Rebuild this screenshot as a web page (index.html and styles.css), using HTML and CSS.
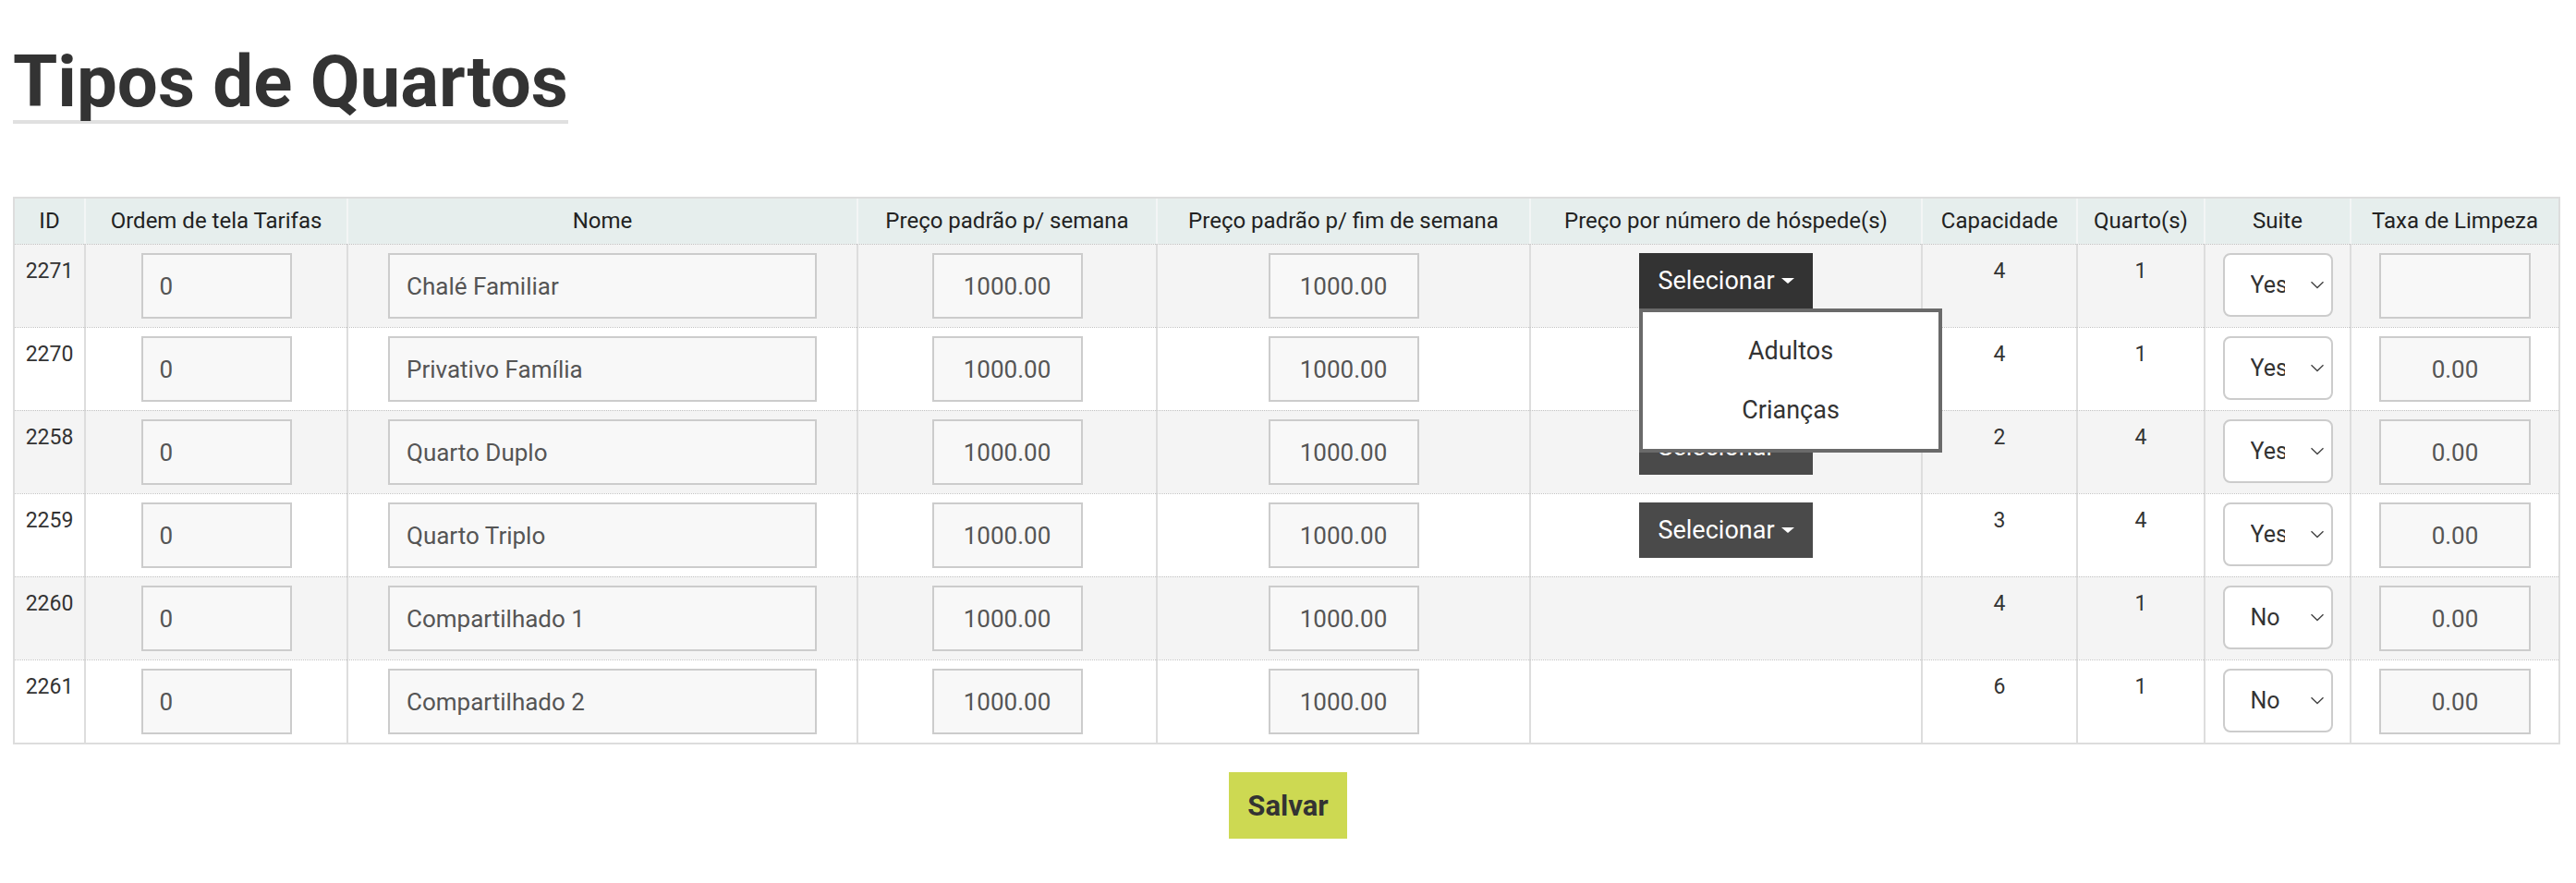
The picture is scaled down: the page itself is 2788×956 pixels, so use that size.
FILE: index.html
```html
<!DOCTYPE html>
<html lang="pt">
<head>
<meta charset="utf-8">
<title>Tipos de Quartos</title>
<link rel="stylesheet" href="styles.css">
</head>
<body>
<div class="page">
  <div class="title-bar"><h1 class="title">Tipos de Quartos</h1></div>

  <table class="rooms">
    <thead>
      <tr>
        <th class="col-id">ID</th>
        <th class="col-order">Ordem de tela Tarifas</th>
        <th class="col-name">Nome</th>
        <th class="col-week">Preço padrão p/ semana</th>
        <th class="col-weekend">Preço padrão p/ fim de semana</th>
        <th class="col-guest">Preço por número de hóspede(s)</th>
        <th class="col-cap">Capacidade</th>
        <th class="col-rooms">Quarto(s)</th>
        <th class="col-suite">Suite</th>
        <th class="col-fee">Taxa de Limpeza</th>
      </tr>
    </thead>
    <tbody>
      <tr>
        <td class="cell-text">2271</td>
        <td><input class="field field-order" value="0"></td>
        <td><input class="field field-name" value="Chalé Familiar"></td>
        <td><input class="field field-price" value="1000.00"></td>
        <td><input class="field field-price" value="1000.00"></td>
        <td>
          <div class="dropdown">
            <button class="select-btn is-active" type="button">Selecionar<span class="caret"></span></button>
            <ul class="dropdown-menu">
              <li>Adultos</li>
              <li>Crianças</li>
            </ul>
          </div>
        </td>
        <td class="cell-text">4</td>
        <td class="cell-text">1</td>
        <td><div class="suite"><select class="suite-select"><option selected>Yes</option><option>No</option></select><svg class="chev" width="16" height="9" viewBox="0 0 16 9"><path d="M1.5 1.2 8 7.6l6.5-6.4" fill="none" stroke="#444" stroke-width="1.4"/></svg></div></td>
        <td><input class="field field-fee" value=""></td>
      </tr>
      <tr>
        <td class="cell-text">2270</td>
        <td><input class="field field-order" value="0"></td>
        <td><input class="field field-name" value="Privativo Família"></td>
        <td><input class="field field-price" value="1000.00"></td>
        <td><input class="field field-price" value="1000.00"></td>
        <td><div class="dropdown"><button class="select-btn" type="button">Selecionar<span class="caret"></span></button></div></td>
        <td class="cell-text">4</td>
        <td class="cell-text">1</td>
        <td><div class="suite"><select class="suite-select"><option selected>Yes</option><option>No</option></select><svg class="chev" width="16" height="9" viewBox="0 0 16 9"><path d="M1.5 1.2 8 7.6l6.5-6.4" fill="none" stroke="#444" stroke-width="1.4"/></svg></div></td>
        <td><input class="field field-fee" value="0.00"></td>
      </tr>
      <tr>
        <td class="cell-text">2258</td>
        <td><input class="field field-order" value="0"></td>
        <td><input class="field field-name" value="Quarto Duplo"></td>
        <td><input class="field field-price" value="1000.00"></td>
        <td><input class="field field-price" value="1000.00"></td>
        <td><div class="dropdown"><button class="select-btn" type="button">Selecionar<span class="caret"></span></button></div></td>
        <td class="cell-text">2</td>
        <td class="cell-text">4</td>
        <td><div class="suite"><select class="suite-select"><option selected>Yes</option><option>No</option></select><svg class="chev" width="16" height="9" viewBox="0 0 16 9"><path d="M1.5 1.2 8 7.6l6.5-6.4" fill="none" stroke="#444" stroke-width="1.4"/></svg></div></td>
        <td><input class="field field-fee" value="0.00"></td>
      </tr>
      <tr>
        <td class="cell-text">2259</td>
        <td><input class="field field-order" value="0"></td>
        <td><input class="field field-name" value="Quarto Triplo"></td>
        <td><input class="field field-price" value="1000.00"></td>
        <td><input class="field field-price" value="1000.00"></td>
        <td><div class="dropdown"><button class="select-btn" type="button">Selecionar<span class="caret"></span></button></div></td>
        <td class="cell-text">3</td>
        <td class="cell-text">4</td>
        <td><div class="suite"><select class="suite-select"><option selected>Yes</option><option>No</option></select><svg class="chev" width="16" height="9" viewBox="0 0 16 9"><path d="M1.5 1.2 8 7.6l6.5-6.4" fill="none" stroke="#444" stroke-width="1.4"/></svg></div></td>
        <td><input class="field field-fee" value="0.00"></td>
      </tr>
      <tr>
        <td class="cell-text">2260</td>
        <td><input class="field field-order" value="0"></td>
        <td><input class="field field-name" value="Compartilhado 1"></td>
        <td><input class="field field-price" value="1000.00"></td>
        <td><input class="field field-price" value="1000.00"></td>
        <td></td>
        <td class="cell-text">4</td>
        <td class="cell-text">1</td>
        <td><div class="suite"><select class="suite-select"><option>Yes</option><option selected>No</option></select><svg class="chev" width="16" height="9" viewBox="0 0 16 9"><path d="M1.5 1.2 8 7.6l6.5-6.4" fill="none" stroke="#444" stroke-width="1.4"/></svg></div></td>
        <td><input class="field field-fee" value="0.00"></td>
      </tr>
      <tr>
        <td class="cell-text">2261</td>
        <td><input class="field field-order" value="0"></td>
        <td><input class="field field-name" value="Compartilhado 2"></td>
        <td><input class="field field-price" value="1000.00"></td>
        <td><input class="field field-price" value="1000.00"></td>
        <td></td>
        <td class="cell-text">6</td>
        <td class="cell-text">1</td>
        <td><div class="suite"><select class="suite-select"><option>Yes</option><option selected>No</option></select><svg class="chev" width="16" height="9" viewBox="0 0 16 9"><path d="M1.5 1.2 8 7.6l6.5-6.4" fill="none" stroke="#444" stroke-width="1.4"/></svg></div></td>
        <td><input class="field field-fee" value="0.00"></td>
      </tr>
    </tbody>
  </table>

  <div class="actions"><button class="save-btn" type="button">Salvar</button></div>
</div>
</body>
</html>
```

FILE: styles.css
```css
* { box-sizing: border-box; }

html, body {
  margin: 0;
  padding: 0;
  background: #fff;
}

body {
  font-family: "Roboto", "Liberation Sans", sans-serif;
  color: #333;
}

.page {
  padding: 48px 14px 0 14px;
}

.title-bar {
  display: flex;
  align-items: flex-start;
}

.title {
  margin: 0;
  font-family: "Roboto", sans-serif;
  font-weight: 700;
  font-size: 78px;
  line-height: 82px;
  color: #333;
  border-bottom: 4px solid #e0e0e0;
}

.rooms {
  margin-top: 79px;
  width: 2757px;
  table-layout: fixed;
  border-collapse: separate;
  border-spacing: 0;
  border: 2px solid #ddd;
  font-family: "Roboto", sans-serif;
}

.rooms th {
  background: #e6eeed;
  font-weight: 400;
  font-size: 24px;
  line-height: 27px;
  padding: 11px 2px;
  color: #222;
  text-align: center;
  vertical-align: middle;
  white-space: nowrap;
  border-left: 2px solid #f3f5f5;
}

.rooms th:first-child { border-left: none; }

.col-id { width: 75px; }
.col-order { width: 284px; }
.col-name { width: 552px; }
.col-week { width: 324px; }
.col-weekend { width: 404px; }
.col-guest { width: 424px; }
.col-cap { width: 168px; }
.col-rooms { width: 138px; }
.col-suite { width: 158px; }
.col-fee { width: 226px; }

.rooms td {
  padding: 9px 4px;
  vertical-align: top;
  text-align: center;
  border-top: 1px dotted #c2c2c2;
  border-left: 2px solid #ddd;
  font-size: 23px;
}

.rooms td:first-child { border-left: none; }

.rooms tbody tr:nth-child(odd) td { background: #f4f4f4; }
.rooms tbody tr:nth-child(even) td { background: #fff; }

.cell-text {
  line-height: 40px;
  color: #333;
}

.field {
  display: block;
  margin: 0 auto;
  height: 71px;
  border: 2px solid #ccc;
  border-radius: 0;
  background: #f8f8f8;
  font-family: "Roboto", sans-serif;
  font-size: 26px;
  color: #555;
  padding: 0 18px;
  outline: none;
}

.field-order { width: 163px; text-align: left; }
.field-name { width: 464px; text-align: left; }
.field-price { width: 163px; text-align: center; }
.field-fee { width: 164px; text-align: center; }

.dropdown {
  position: relative;
  width: 188px;
  height: 60px;
  margin: 0 auto;
}

.select-btn {
  display: flex;
  align-items: center;
  justify-content: center;
  width: 188px;
  height: 60px;
  padding: 0;
  border: none;
  background: #4a4a4a;
  color: #fff;
  font-family: "Roboto", sans-serif;
  font-size: 27px;
}

.select-btn.is-active { background: #333; }

.caret {
  display: inline-block;
  width: 0;
  height: 0;
  margin-left: 7px;
  border-left: 7px solid transparent;
  border-right: 7px solid transparent;
  border-top: 6px solid #fff;
}

.dropdown-menu {
  position: absolute;
  top: 100%;
  left: 0;
  z-index: 10;
  width: 328px;
  margin: 0;
  padding: 10px 0;
  list-style: none;
  background: #fff;
  border: 4px solid #6a6a6a;
}

.dropdown-menu li {
  font-size: 27px;
  line-height: 64px;
  color: #333;
  text-align: center;
}

.suite {
  position: relative;
  width: 119px;
  height: 69px;
  margin: 0 auto;
}

.suite-select {
  appearance: none;
  -webkit-appearance: none;
  display: block;
  width: 119px;
  height: 69px;
  padding: 0 50px 0 28px;
  border: 2px solid #ccc;
  border-radius: 8px;
  background: #fff;
  font-family: "Roboto", sans-serif;
  font-size: 25px;
  color: #333;
  outline: none;
}

.chev {
  position: absolute;
  right: 9px;
  top: 30px;
  pointer-events: none;
}

.actions {
  display: flex;
  justify-content: center;
  margin-top: 30px;
}

.save-btn {
  width: 128px;
  height: 72px;
  padding: 0;
  border: none;
  background: #cdd952;
  color: #333;
  font-family: "Roboto", sans-serif;
  font-weight: 700;
  font-size: 31px;
}
```
